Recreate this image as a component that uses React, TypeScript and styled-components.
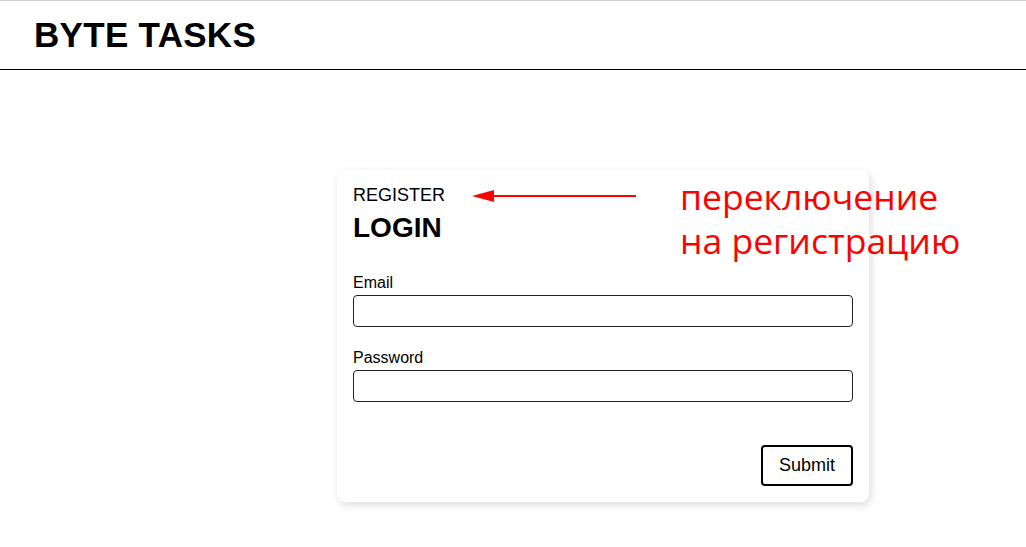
import React from "react";
import styled, { createGlobalStyle } from "styled-components";

const Global = createGlobalStyle`
  html, body { margin: 0; padding: 0; background: #fff; }
  body { font-family: "Liberation Sans", Arial, sans-serif; color: #000; }
`;

const Page = styled.div`
  position: relative;
  min-height: 547px;
`;

const Header = styled.header`
  height: 68px;
  border-top: 1px solid #cfcfcf;
  border-bottom: 1px solid #000;
  display: flex;
  align-items: center;
  padding-left: 34px;
`;

const Logo = styled.h1`
  margin: 0;
  font-size: 35px;
  font-weight: 700;
  line-height: 1;
  letter-spacing: 0.3px;
  transform: translateY(-1px);
`;

const Main = styled.main`
  display: flex;
  padding: 100px 0 0 337px;
`;

const Card = styled.div`
  position: relative;
  width: 500px;
  padding: 14px 16px 16px;
  background: #fff;
  border-radius: 8px;
  box-shadow: 2px 3px 8px rgba(0, 0, 0, 0.14);
  display: flex;
  flex-direction: column;
`;

const Switch = styled.button`
  align-self: flex-start;
  background: none;
  border: none;
  padding: 0;
  font: inherit;
  font-size: 18px;
  line-height: 22px;
  color: #000;
  cursor: pointer;
`;

const Title = styled.h2`
  margin: 5px 0 0;
  font-size: 28px;
  line-height: 33px;
  font-weight: 700;
`;

const Field = styled.label<{ $top: number }>`
  display: flex;
  flex-direction: column;
  margin-top: ${(p) => p.$top}px;
  font-size: 16px;
  line-height: 18px;
`;

const Input = styled.input`
  margin-top: 3px;
  height: 32px;
  box-sizing: border-box;
  border: 1px solid #222;
  border-radius: 4px;
  font: inherit;
  padding: 0 8px;
`;

const Actions = styled.div`
  display: flex;
  justify-content: flex-end;
  margin-top: 43px;
`;

const Submit = styled.button`
  width: 92px;
  height: 41px;
  box-sizing: border-box;
  background: #fff;
  border: 2px solid #000;
  border-radius: 4px;
  font-family: inherit;
  font-size: 18px;
  color: #000;
  cursor: pointer;
`;

const Note = styled.div`
  position: absolute;
  left: 680px;
  top: 174px;
  color: #ff0000;
  font-family: "Open Sans", "Noto Sans", sans-serif;
  font-size: 35.5px;
  line-height: 44px;
`;

const Arrow = styled.svg`
  position: absolute;
  left: 472px;
  top: 188px;
`;

export default function App() {
  return (
    <Page>
      <Global />
      <Header>
        <Logo>BYTE TASKS</Logo>
      </Header>
      <Main>
        <Card>
          <Switch type="button">REGISTER</Switch>
          <Title>LOGIN</Title>
          <Field $top={30}>
            Email
            <Input type="email" />
          </Field>
          <Field $top={22}>
            Password
            <Input type="password" />
          </Field>
          <Actions>
            <Submit type="button">Submit</Submit>
          </Actions>
        </Card>
      </Main>
      <Arrow width="166" height="16" viewBox="0 0 166 16">
        <line x1="18" y1="8" x2="164" y2="8" stroke="#ff0000" strokeWidth="2" />
        <polygon points="0,8 22,2 22,14" fill="#ff0000" />
      </Arrow>
      <Note>
        переключение
        <br />
        на регистрацию
      </Note>
    </Page>
  );
}
